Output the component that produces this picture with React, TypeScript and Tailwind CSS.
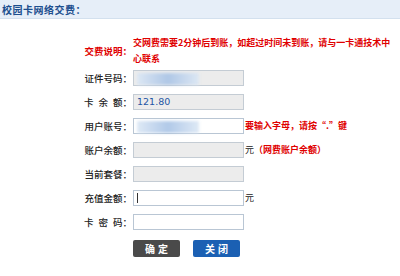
import React from "react";

const Blur = ({ w = 62 }: { w?: number }) => (
  <div className="absolute left-[3px] top-[2px] h-[12px] flex items-center blur-[1.5px]" style={{ width: w }}>
    <div className="h-full w-full bg-gradient-to-r from-[#dbe7f5] via-[#a9c4e6] to-[#dbe7f5] opacity-90" />
  </div>
);

const Label = ({ children }: { children: React.ReactNode }) => (
  <div className="w-[133px] pr-[1px] text-right text-[9.5px] leading-4 text-[#222] font-medium">{children}</div>
);

const Spaced = ({ text }: { text: string }) => (
  <>
    <span className="tracking-[5px]">{text.slice(0, 2)}</span>
    {text.slice(2)}：
  </>
);

const Box = ({ gray, children }: { gray?: boolean; children?: React.ReactNode }) => (
  <div
    className={`relative w-[111px] h-[16px] border ${gray ? "bg-[#ececec] border-[#c4ccd4]" : "bg-white border-[#b9c6d4]"}`}
  >
    {children}
  </div>
);

export default function App() {
  return (
    <div className="w-[400px] h-[276px] bg-white overflow-hidden" style={{ fontFamily: '"Noto Sans CJK SC", "Noto Sans", sans-serif' }}>
      <div className="h-[19px] bg-[#e6eef8] border-b border-[#d3e0ee] flex items-center pl-[2px]">
        <span className="text-[10px] font-bold text-[#1d4f8e] tracking-[0.5px]">校园卡网络交费：</span>
      </div>
      <div className="flex flex-col mt-[16px]">
        <div className="flex items-center">
          <Label>
            <span className="text-[#e00000] font-bold">交费说明：</span>
          </Label>
          <div className="w-[262px] text-[9px] leading-4 font-bold text-[#e00000]">
            交网费需要2分钟后到账，如超过时间未到账，请与一卡通技术中心联系
          </div>
        </div>
        <div className="flex flex-col gap-2 mt-[3px]">
          <div className="flex items-center h-4">
            <Label>证件号码：</Label>
            <Box gray>
              <Blur w={62} />
            </Box>
          </div>
          <div className="flex items-center h-4">
            <Label>
              <Spaced text="卡余额" />
            </Label>
            <Box gray>
              <span
                className="absolute left-[3px] top-0 leading-[14px] text-[9.5px] text-[#2456a4]"
                style={{ fontFamily: '"DejaVu Sans", sans-serif' }}
              >
                121.80
              </span>
            </Box>
          </div>
          <div className="flex items-center h-4">
            <Label>用户账号：</Label>
            <Box>
              <Blur w={62} />
            </Box>
            <span className="ml-[1px] text-[9px] font-bold text-[#e00000]">要输入字母，请按“.”键</span>
          </div>
          <div className="flex items-center h-4">
            <Label>账户余额：</Label>
            <Box gray />
            <span className="ml-[1px] text-[9px] text-[#222]">元</span>
            <span className="text-[9px] font-bold text-[#e00000]">（网费账户余额）</span>
          </div>
          <div className="flex items-center h-4">
            <Label>当前套餐：</Label>
            <Box gray />
          </div>
          <div className="flex items-center h-4">
            <Label>充值金额：</Label>
            <Box>
              <div className="absolute left-[3px] top-[2px] w-px h-[10px] bg-[#333]" />
            </Box>
            <span className="ml-[1px] text-[9px] text-[#222]">元</span>
          </div>
          <div className="flex items-center h-4">
            <Label>
              <Spaced text="卡密码" />
            </Label>
            <Box />
          </div>
        </div>
        <div className="flex mt-[10px] pl-[133px] gap-[13px]">
          <div className="w-[47px] h-[17px] rounded-[2px] bg-[#4a4a4a] flex items-center justify-center text-white text-[10px] font-bold tracking-[3px] pl-[3px]">
            确定
          </div>
          <div className="w-[47px] h-[17px] rounded-[2px] bg-[#1b60b3] flex items-center justify-center text-white text-[10px] font-bold tracking-[3px] pl-[3px]">
            关闭
          </div>
        </div>
      </div>
    </div>
  );
}
